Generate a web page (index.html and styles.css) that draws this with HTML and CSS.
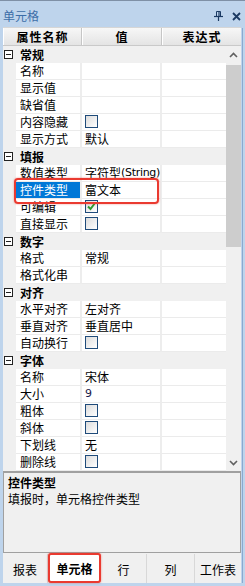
FILE: index.html
```html
<!DOCTYPE html>
<html>
<head>
<meta charset="utf-8">
<link rel="stylesheet" href="styles.css">
</head>
<body>
<div class="frame">
  <div class="titlebar">
    <span class="title">单元格</span>
    <span class="tools">
      <svg class="pin" width="9" height="10" viewBox="0 0 9 10"><path d="M2.5 0.5h4v5h-4z" fill="none" stroke="#1b3a63" stroke-width="1"/><path d="M5 1v4.5" stroke="#1b3a63" stroke-width="1.2"/><path d="M0 5.5h9" stroke="#1b3a63" stroke-width="1.2"/><path d="M4.5 6v4" stroke="#1b3a63" stroke-width="1.2"/></svg>
      <svg class="close" width="9" height="9" viewBox="0 0 9 9"><path d="M1 1l7 7M8 1l-7 7" stroke="#1b3a63" stroke-width="1.8"/></svg>
    </span>
  </div>
  <div class="header">
    <div class="hc h1">属性名称</div>
    <div class="hc h2">值</div>
    <div class="hc h3">表达式</div>
  </div>
  <div class="gridwrap">
    <div class="grid">
      <div class="grp"><span class="tog"></span><span class="glabel">常规</span></div>
      <div class="row"><span class="gut"></span><span class="nm">名称</span><span class="val"></span><span class="ex"></span></div>
      <div class="row"><span class="gut"></span><span class="nm">显示值</span><span class="val"></span><span class="ex"></span></div>
      <div class="row"><span class="gut"></span><span class="nm">缺省值</span><span class="val"></span><span class="ex"></span></div>
      <div class="row"><span class="gut"></span><span class="nm">内容隐藏</span><span class="val"><span class="cb"></span></span><span class="ex"></span></div>
      <div class="row"><span class="gut"></span><span class="nm">显示方式</span><span class="val">默认</span><span class="ex"></span></div>

      <div class="grp"><span class="tog"></span><span class="glabel">填报</span></div>
      <div class="row"><span class="gut"></span><span class="nm">数值类型</span><span class="val">字符型<span class="lat">(String)</span></span><span class="ex"></span></div>
      <div class="row"><span class="gut"></span><span class="nm sel">控件类型</span><span class="val">富文本</span><span class="ex"></span></div>
      <div class="row"><span class="gut"></span><span class="nm">可编辑</span><span class="val"><span class="cb"><svg width="11" height="11" viewBox="0 0 11 11"><path d="M2 5.5l2.5 2.5 4.5-6" fill="none" stroke="#2e9a2e" stroke-width="2"/></svg></span></span><span class="ex"></span></div>
      <div class="row"><span class="gut"></span><span class="nm">直接显示</span><span class="val"><span class="cb"></span></span><span class="ex"></span></div>

      <div class="grp"><span class="tog"></span><span class="glabel">数字</span></div>
      <div class="row"><span class="gut"></span><span class="nm">格式</span><span class="val">常规</span><span class="ex"></span></div>
      <div class="row"><span class="gut"></span><span class="nm">格式化串</span><span class="val"></span><span class="ex"></span></div>

      <div class="grp"><span class="tog"></span><span class="glabel">对齐</span></div>
      <div class="row"><span class="gut"></span><span class="nm">水平对齐</span><span class="val">左对齐</span><span class="ex"></span></div>
      <div class="row"><span class="gut"></span><span class="nm">垂直对齐</span><span class="val">垂直居中</span><span class="ex"></span></div>
      <div class="row"><span class="gut"></span><span class="nm">自动换行</span><span class="val"><span class="cb"></span></span><span class="ex"></span></div>

      <div class="grp"><span class="tog"></span><span class="glabel">字体</span></div>
      <div class="row"><span class="gut"></span><span class="nm">名称</span><span class="val">宋体</span><span class="ex"></span></div>
      <div class="row"><span class="gut"></span><span class="nm">大小</span><span class="val"><span class="num">9</span></span><span class="ex"></span></div>
      <div class="row"><span class="gut"></span><span class="nm">粗体</span><span class="val"><span class="cb"></span></span><span class="ex"></span></div>
      <div class="row"><span class="gut"></span><span class="nm">斜体</span><span class="val"><span class="cb"></span></span><span class="ex"></span></div>
      <div class="row"><span class="gut"></span><span class="nm">下划线</span><span class="val">无</span><span class="ex"></span></div>
      <div class="row"><span class="gut"></span><span class="nm">删除线</span><span class="val"><span class="cb"></span></span><span class="ex"></span></div>

      <div class="highlight"></div>
    </div>
    <div class="scrollbar">
      <div class="sbtn"><svg width="9" height="6" viewBox="0 0 9 6"><path d="M1 5l3.5-3.5L8 5" fill="none" stroke="#606060" stroke-width="1.6"/></svg></div>
      <div class="track"><div class="thumb"></div></div>
      <div class="sbtn"><svg width="9" height="6" viewBox="0 0 9 6"><path d="M1 1l3.5 3.5L8 1" fill="none" stroke="#606060" stroke-width="1.6"/></svg></div>
    </div>
  </div>
  <div class="desc">
    <div class="dtitle">控件类型</div>
    <div class="dtext">填报时，单元格控件类型</div>
  </div>
  <div class="tabs">
    <div class="tab">报表</div>
    <div class="tab active">单元格</div>
    <div class="tab">行</div>
    <div class="tab">列</div>
    <div class="tab">工作表</div>
  </div>
</div>
</body>
</html>
```

FILE: styles.css
```css
* { box-sizing: border-box; }
html, body { margin: 0; padding: 0; }
body {
  width: 245px;
  height: 586px;
  overflow: hidden;
  font-family: "Noto Sans CJK SC", "Noto Sans", sans-serif;
  font-size: 12px;
  color: #000;
}
.frame {
  display: flex;
  flex-direction: column;
  width: 245px;
  height: 586px;
  background: #bed4ec;
  padding: 0 4px 3px 3px;
  border-top: 1px solid #7f90a6;
  position: relative;
}
.frame::after {
  content: "";
  position: absolute;
  right: 2px;
  top: 27px;
  bottom: 3px;
  width: 1px;
  background: #8aaad0;
}
.titlebar {
  height: 26px;
  display: flex;
  align-items: center;
  justify-content: space-between;
  margin-left: -3px;
  padding-left: 3px;
  padding-right: 0;
}
.title {
  color: #3d6ea8;
  font-size: 12px;
  line-height: 16px;
  margin-top: 3px;
}
.tools { display: flex; align-items: center; gap: 9px; margin-top: 4px; margin-right: 0; }
.header {
  height: 19px;
  display: flex;
  background: linear-gradient(#f7f7f7, #e4e4e4);
  border-bottom: 1px solid #c9c9c9;
  border-top: 1px solid #d6d6d6;
}
.hc {
  display: flex;
  align-items: center;
  justify-content: center;
  font-weight: bold;
  letter-spacing: 1px;
  line-height: 16px;
  border-right: 1px solid #c6c6c6;
  border-left: 1px solid #fff;
}
.h1 { width: 79px; }
.h2 { width: 80px; }
.h3 { width: 79px; border-right: none; }
.gridwrap {
  height: 425px;
  display: flex;
  background: #fff;
}
.grid {
  width: 223px;
  position: relative;
  display: flex;
  flex-direction: column;
}
.row, .grp {
  height: 17px;
  display: flex;
  line-height: 16px;
}
.grp {
  background: #f0f0f0;
  align-items: center;
}
.tog {
  width: 9px;
  height: 9px;
  border: 1px solid #222;
  margin-left: 1px;
  position: relative;
  background: #fff;
}
.tog::after {
  content: "";
  position: absolute;
  left: 1px;
  right: 1px;
  top: 3px;
  height: 1px;
  background: #222;
}
.glabel {
  font-weight: bold;
  margin-left: 7px;
  letter-spacing: 0;
}
.gut { width: 13px; background: #f0f0f0; }
.nm, .val, .ex {
  border-bottom: 1px solid #ebebeb;
  border-right: 2px solid #ededed;
  white-space: nowrap;
  overflow: hidden;
  display: flex;
  align-items: center;
  height: 17px;
}
.nm { width: 66px; padding-left: 4px; }
.val { width: 80px; padding-left: 3px; }
.ex { width: 64px; border-right: none; }
.nm.sel { background: #0078d7; color: #fff; }
.lat {
  font-family: "DejaVu Sans", sans-serif;
  font-size: 11px;
  letter-spacing: -0.3px;
}
.num {
  font-family: "DejaVu Sans", sans-serif;
  font-size: 11px;
  color: #1a1a4a;
}
.cb {
  width: 13px;
  height: 13px;
  border: 1px solid #1f4b7a;
  background: linear-gradient(135deg, #dcdcdc, #ffffff);
  display: flex;
  align-items: center;
  justify-content: center;
  margin-top: -1px;
}
.highlight {
  position: absolute;
  left: 11px;
  top: 132px;
  width: 145px;
  height: 26px;
  border: 2px solid #ea3a30;
  border-radius: 4px;
  box-shadow: 0 0 2px rgba(234, 58, 48, 0.6);
}
.scrollbar {
  width: 15px;
  background: #f0f0f0;
  display: flex;
  flex-direction: column;
}
.sbtn {
  height: 17px;
  display: flex;
  align-items: center;
  justify-content: center;
}
.track { flex: 1; }
.thumb {
  margin-top: 2px;
  height: 182px;
  background: #cdcdcd;
}
.desc {
  height: 82px;
  background: #f0f0f0;
  border: 1px solid #a0a0a0;
  border-top: 2px solid #a0a0a0;
  padding: 2px 0 0 4px;
  line-height: 16px;
}
.dtitle { font-weight: bold; }
.tabs {
  height: 30px;
  display: flex;
  background: #f0f0f0;
  padding-top: 1px;
}
.tab {
  display: flex;
  align-items: center;
  justify-content: center;
  border-right: 1px solid #d8d8d8;
  line-height: 16px;
  padding-top: 2px;
}
.tab:nth-child(1) { width: 45px; }
.tab:nth-child(2) { width: 53px; }
.tab:nth-child(3) { width: 46px; }
.tab:nth-child(4) { width: 48px; }
.tab:nth-child(5) { width: 46px; border-right: none; }
.tab.active {
  background: #fff;
  font-weight: bold;
  border: 2px solid #ea3a30;
  border-radius: 3px;
  box-shadow: 0 0 2px rgba(234, 58, 48, 0.6);
  margin-top: -1px;
}
```
